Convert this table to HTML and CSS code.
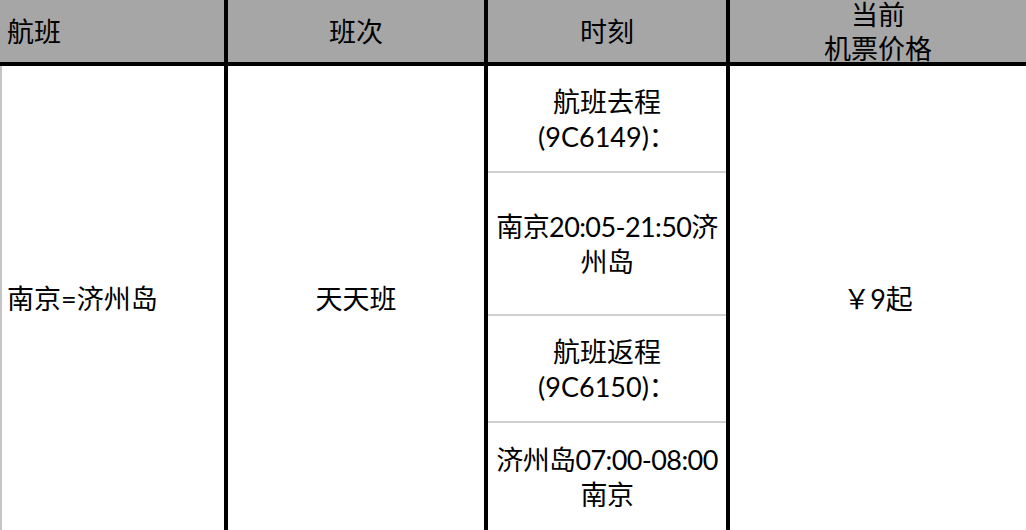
FILE: index.html
```html
<!DOCTYPE html>
<html lang="zh-CN">
<head>
<meta charset="utf-8">
<title>航班</title>
<link rel="stylesheet" href="styles.css">
</head>
<body>
<div class="table">
  <div class="th th-left">航班</div>
  <div class="th">班次</div>
  <div class="th">时刻</div>
  <div class="th th-two">当前<br>机票价格</div>

  <div class="td td-left">南京=济州岛</div>
  <div class="td">天天班</div>
  <div class="td times">
    <div class="slot slot-a">航班去程<br>(9C6149)：</div>
    <div class="slot slot-b tight">南京20:05-21:50济<br>州岛</div>
    <div class="slot slot-a">航班返程<br>(9C6150)：</div>
    <div class="slot slot-c tight">济州岛07:00-08:00<br>南京</div>
  </div>
  <div class="td">￥9起</div>
</div>
</body>
</html>
```

FILE: styles.css
```css
html, body {
  margin: 0;
  padding: 0;
  background: #ffffff;
}

body {
  width: 1026px;
  height: 530px;
  overflow: hidden;
  font-family: "Lato", "Noto Sans CJK SC", sans-serif;
  font-size: 27px;
  line-height: 35px;
  color: #000;
}

.table {
  display: grid;
  grid-template-columns: 224px 256px 238px 296px;
  grid-template-rows: 62px 464px;
  gap: 4px;
  background: #000;
}

.th {
  background: #a6a6a6;
  display: flex;
  align-items: center;
  justify-content: center;
  text-align: center;
}

.th-left {
  justify-content: flex-start;
  padding-left: 7px;
}

.th-two {
  line-height: 34px;
  padding-top: 1px;
}

.td {
  background: #fff;
  display: flex;
  align-items: center;
  justify-content: center;
  text-align: center;
}

.td-left {
  justify-content: flex-start;
  padding-left: 5px;
  border-left: 2px solid #c4c4c4;
}

.times {
  flex-direction: column;
  align-items: stretch;
  justify-content: flex-start;
}

.slot {
  display: flex;
  align-items: center;
  justify-content: center;
  text-align: center;
  border-bottom: 2px solid #d0d0d0;
}

.slot:last-child {
  border-bottom: none;
}

.tight {
  letter-spacing: -0.6px;
}

.slot-a {
  height: 105px;
}

.slot-b {
  height: 141px;
}

.slot-c {
  flex: 1;
}
```
